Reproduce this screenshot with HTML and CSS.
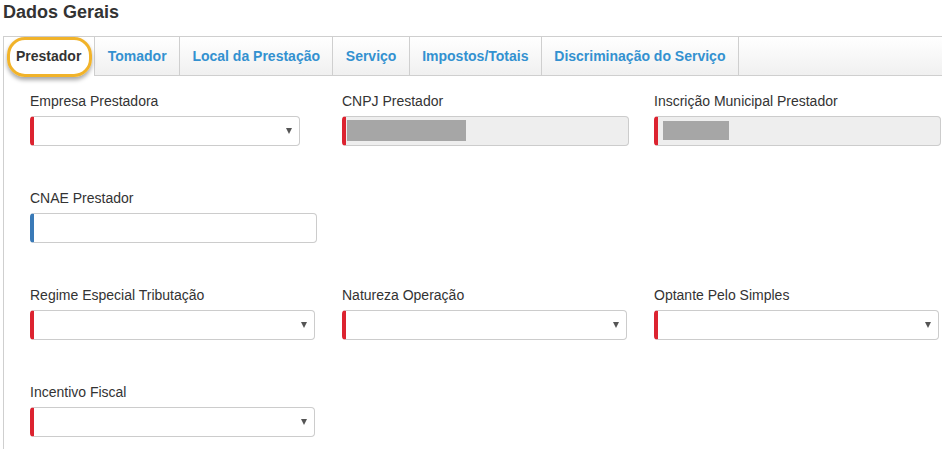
FILE: index.html
```html
<!DOCTYPE html>
<html lang="pt-BR">
<head>
<meta charset="utf-8">
<title>Dados Gerais</title>
<link rel="stylesheet" href="styles.css">
</head>
<body>
<h2 class="title">Dados Gerais</h2>
<div class="tabs">
  <div class="tab active">Prestador<span class="highlight"></span></div>
  <div class="tab">Tomador</div>
  <div class="tab">Local da Prestação</div>
  <div class="tab">Serviço</div>
  <div class="tab">Impostos/Totais</div>
  <div class="tab">Discriminação do Serviço</div>
</div>
<div class="panel">
  <div class="row">
    <div class="field">
      <label>Empresa Prestadora</label>
      <div class="control select req w270"><span class="arrow"></span></div>
    </div>
    <div class="field">
      <label>CNPJ Prestador</label>
      <div class="control req disabled w287"><span class="redact r1"></span></div>
    </div>
    <div class="field">
      <label>Inscrição Municipal Prestador</label>
      <div class="control req disabled w287"><span class="redact r2"></span></div>
    </div>
  </div>
  <div class="row">
    <div class="field">
      <label>CNAE Prestador</label>
      <div class="control opt w287"></div>
    </div>
  </div>
  <div class="row">
    <div class="field">
      <label>Regime Especial Tributação</label>
      <div class="control select req w285"><span class="arrow"></span></div>
    </div>
    <div class="field">
      <label>Natureza Operação</label>
      <div class="control select req w285"><span class="arrow"></span></div>
    </div>
    <div class="field">
      <label>Optante Pelo Simples</label>
      <div class="control select req w285"><span class="arrow"></span></div>
    </div>
  </div>
  <div class="row">
    <div class="field">
      <label>Incentivo Fiscal</label>
      <div class="control select req w285"><span class="arrow"></span></div>
    </div>
  </div>
</div>
</body>
</html>
```
FILE: styles.css
```css
html, body {
  margin: 0;
  padding: 0;
  background: #fff;
  font-family: "Liberation Sans", Arial, sans-serif;
  color: #333;
}
.title {
  margin: 0;
  padding: 1px 3px 0;
  height: 35px;
  font-size: 18px;
  line-height: 22px;
  font-weight: bold;
  color: #333;
}
.tabs {
  margin-left: 3px;
  display: flex;
  height: 38px;
  border-top: 1px solid #cfcfcf;
  border-bottom: 1px solid #cfcfcf;
  background: linear-gradient(#ffffff, #f0f0f0);
}
.tab {
  position: relative;
  padding: 0 12.4px;
  line-height: 38px;
  font-size: 14px;
  font-weight: bold;
  color: #3391d0;
  border-right: 1px solid #cfcfcf;
  white-space: nowrap;
}
.tab.active {
  color: #333;
  background: #fff;
  border-left: 1px solid #cfcfcf;
  padding: 0 13px 0 12px;
  height: 39px;
  margin-bottom: -1px;
}
.highlight {
  position: absolute;
  left: 3px;
  top: 0;
  width: 79px;
  height: 34px;
  border: 3px solid #f1b32a;
  border-radius: 18px;
  box-shadow: 0 3px 4px rgba(0, 0, 0, 0.35);
}
.panel {
  margin-left: 3px;
  border-left: 1px solid #cfcfcf;
  padding: 15px 0 0 26px;
  min-height: 373px;
  box-sizing: border-box;
}
.row {
  display: grid;
  grid-template-columns: 312px 312px 312px;
  margin-bottom: 42px;
}
.field label {
  display: block;
  font-size: 14px;
  line-height: 20px;
  height: 20px;
  margin-bottom: 5px;
  color: #333;
}
.control {
  position: relative;
  height: 30px;
  box-sizing: border-box;
  border: 1px solid #cccccc;
  border-radius: 4px;
  background: #fff;
}
.control.req { border-left: 4px solid #dc2330; }
.control.opt { border-left: 4px solid #3a7ab7; }
.control.disabled { background: #eeeeee; }
.w270 { width: 270px; }
.w285 { width: 285px; }
.w287 { width: 287px; }
.arrow {
  position: absolute;
  right: 7px;
  top: 11px;
  width: 0;
  height: 0;
  border-left: 3.5px solid transparent;
  border-right: 3.5px solid transparent;
  border-top: 6px solid #555;
}
.redact {
  position: absolute;
  background: #a6a6a6;
}
.r1 { left: 1px; top: 3px; width: 119px; height: 21px; }
.r2 { left: 5px; top: 4px; width: 66px; height: 19px; }
```
